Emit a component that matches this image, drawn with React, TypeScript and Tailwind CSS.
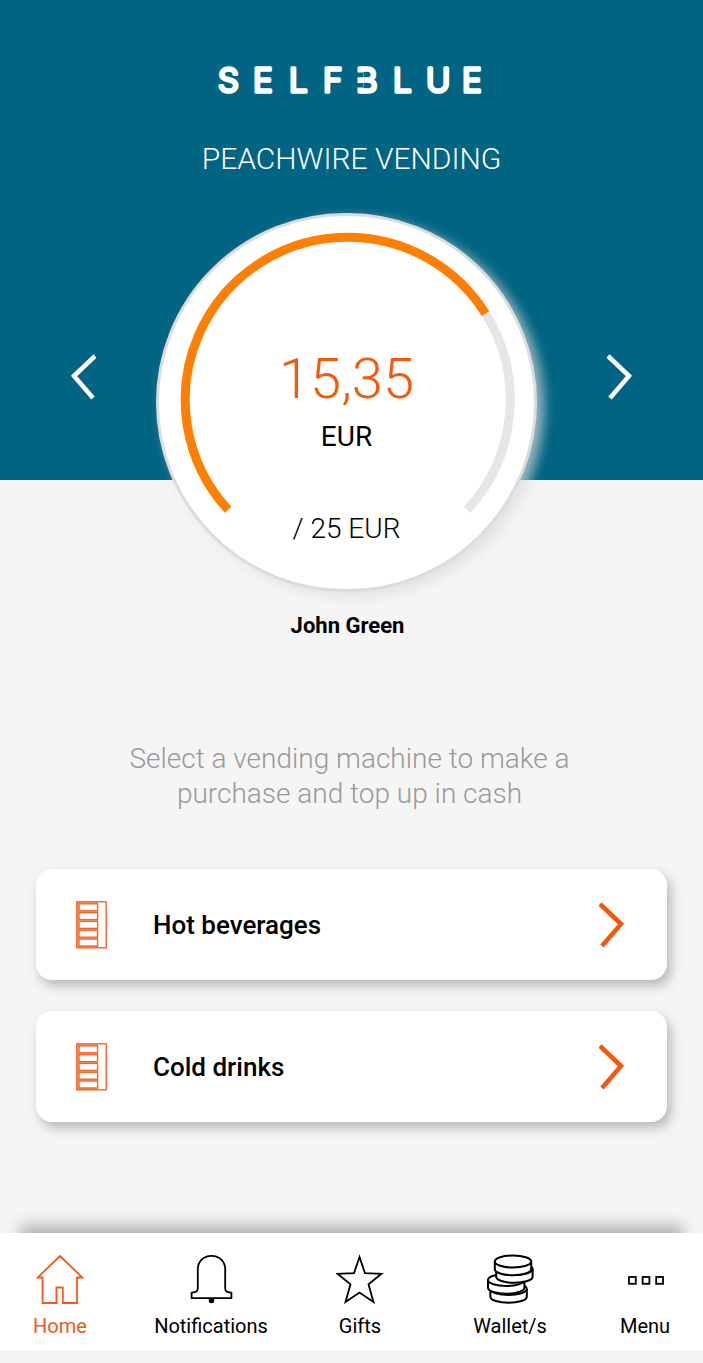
import type { ReactNode } from "react";

const MACHINES = ["Hot beverages", "Cold drinks"];

function Logo() {
  return (
    <svg viewBox="0 0 272 48" className="h-12 w-[272px]" role="img" aria-label="SELFBLUE">
      <text
        x="2 37 73 107 140 177 210 246"
        y="36"
        fontSize="33"
        fontWeight="300"
        strokeWidth="3.4"
        strokeLinejoin="round"
        className="fill-white stroke-white font-[Inter,sans-serif]"
      >
        SELFBLUE
      </text>
      {/* the stem of the B is open between its bars */}
      <path d="M138 16.6h9v4.6h-9zM138 27h9v4.6h-9z" className="fill-[#006482]" />
    </svg>
  );
}

function Chevron({ className = "" }: { className?: string }) {
  return (
    <svg
      viewBox="0 0 26 46"
      fill="none"
      stroke="currentColor"
      strokeWidth="4.5"
      className={`h-[46px] w-[26px] shrink-0 ${className}`}
      aria-hidden="true"
    >
      <path d="M1 2 22 22 3 44" />
    </svg>
  );
}

function MachineIcon() {
  return (
    <svg
      viewBox="0 0 31 48"
      fill="none"
      stroke="#f2652a"
      strokeWidth="1.4"
      className="h-12 w-[31px] shrink-0"
      aria-hidden="true"
    >
      <path d="M1 1h21v46H1z" fill="#fba57e" stroke="none" />
      <rect x="0.8" y="0.8" width="29.4" height="46" />
      {[2.8, 11.6, 20.4, 29.2, 38].map((y) => (
        <rect key={y} x="3" y={y} width="18.6" height="7" fill="white" />
      ))}
    </svg>
  );
}

function Gauge() {
  return (
    <div className="relative flex h-[379px] w-[381px] shrink-0 flex-col items-center rounded-full border-3 border-[#dcdcde] bg-white pt-[135px] shadow-[7px_5px_12px_rgba(218,218,218,0.7)]">
      <svg
        viewBox="0 0 380 380"
        fill="none"
        strokeWidth="9"
        className="absolute -top-[3px] -left-[3px] size-[380px]"
        aria-hidden="true"
      >
        <path d="M329.5 100.6A162.5 162.5 0 0 1 311.3 296.7" stroke="#e6e6e6" />
        <path
          d="M72.1 296.7A162.5 162.5 0 0 1 191.7 24.2A162.5 162.5 0 0 1 329.5 100.6"
          stroke="#ff8000"
        />
      </svg>
      <p className="text-[56px] leading-14 font-light text-[#f55a0a]">15,35</p>
      <p className="mt-3.5 text-[28px] leading-8">EUR</p>
      <p className="mt-15 text-[28px] leading-8 font-light">/ 25 EUR</p>
    </div>
  );
}

function Coin({ cx, cy }: { cx: number; cy: number }) {
  return (
    <g fill="white" strokeWidth="2">
      <path d={`M${cx - 18.2} ${cy}v7.8a18.2 6 0 0 0 36.4 0v-7.8`} />
      <ellipse cx={cx} cy={cy} rx="18.2" ry="6" />
    </g>
  );
}

function NavItem({
  label,
  active = false,
  children,
}: {
  label: string;
  active?: boolean;
  children: ReactNode;
}) {
  return (
    <a
      href="#"
      aria-current={active ? "page" : undefined}
      className={[
        "flex flex-col items-center gap-2.5 text-xl leading-6",
        active ? "text-[#f05a1a]" : "text-black",
      ].join(" ")}
    >
      <svg
        viewBox="0 0 48 50"
        fill="none"
        stroke="currentColor"
        strokeWidth="1.8"
        className="h-[50px] w-12"
        aria-hidden="true"
      >
        {children}
      </svg>
      {label}
    </a>
  );
}

export default function App() {
  return (
    <div className="flex min-h-screen flex-col bg-[#f5f5f5] font-[Roboto,sans-serif] text-black">
      {/* Header */}
      <header className="flex flex-col items-center bg-[#006482] pt-14">
        <Logo />
        <h1 className="mt-[37px] text-3xl leading-9 font-light text-white">
          PEACHWIRE VENDING
        </h1>
        <div className="-mb-28 mt-9 flex items-start justify-center">
          <button aria-label="Previous wallet" className="mt-[141px] mr-15 text-white">
            <Chevron className="-scale-x-100" />
          </button>
          <Gauge />
          <button aria-label="Next wallet" className="mt-[141px] ml-[70px] text-white">
            <Chevron />
          </button>
        </div>
      </header>

      <main className="flex flex-col pt-[132px] pb-10">
        <div className="flex flex-col items-center text-center">
          <h2 className="pr-2 text-[22px] leading-7 font-bold">John Green</h2>
          <p className="mt-[101px] max-w-[460px] pr-1 text-[28px] leading-[35px] font-light text-[#999]">
            Select a vending machine to make a purchase and top up in cash
          </p>
        </div>

        {/* Machines */}
        <div className="mt-[58px] flex flex-col gap-[31px] px-9">
          {MACHINES.map((name) => (
            <button
              key={name}
              className="flex h-[111px] items-center rounded-2xl bg-white pr-[42px] pl-10 text-left shadow-[4px_6px_12px_rgba(0,0,0,0.25)]"
            >
              <MachineIcon />
              <span className="ml-[46px] flex-1 text-[26px] leading-8 font-medium">{name}</span>
              <Chevron className="text-[#f5560a]" />
            </button>
          ))}
        </div>
      </main>

      {/* Bottom navigation */}
      <nav className="mt-auto mb-[13px] grid grid-cols-[120fr_182fr_116fr_184fr_86fr] bg-white pt-[21px] pr-[15px] pb-3 shadow-[0_-28px_14px_-20px_rgba(0,0,0,0.27)]">
        <NavItem label="Home" active>
          <path d="M24 2 46.3 23.5H41V49H26.8V33.5H20.4V49H6.6V23.5H1.7Z" />
        </NavItem>
        <NavItem label="Notifications">
          <path d="M24.5 1.8C16 1.8 10.8 8 10.8 15v19c0 2.5-1.5 4-3 4.2l-3.2.6v5.4h39.8v-5.4l-3.2-.6c-1.5-.2-3-1.7-3-4.2V15c0-7-5.2-13.2-13.7-13.2Z" />
          <circle cx="24.5" cy="46.5" r="1.9" fill="currentColor" />
        </NavItem>
        <NavItem label="Gifts">
          <path d="M23.5 3 29 19.2 45.5 19.8 32.5 30.3 37.5 48 23.5 38.5 9.5 48 14.5 30.3 1.5 19.8 18 19.2Z" />
        </NavItem>
        <NavItem label="Wallet/s">
          <Coin cx={22.6} cy={35} />
          <Coin cx={20.2} cy={26} />
          <Coin cx={28.4} cy={15} />
          <Coin cx={27} cy={7.5} />
        </NavItem>
        <NavItem label="Menu">
          <rect x="8" y="23" width="6.8" height="6.8" />
          <rect x="21.6" y="23" width="6.8" height="6.8" />
          <rect x="35.2" y="23" width="6.8" height="6.8" />
        </NavItem>
      </nav>
    </div>
  );
}
